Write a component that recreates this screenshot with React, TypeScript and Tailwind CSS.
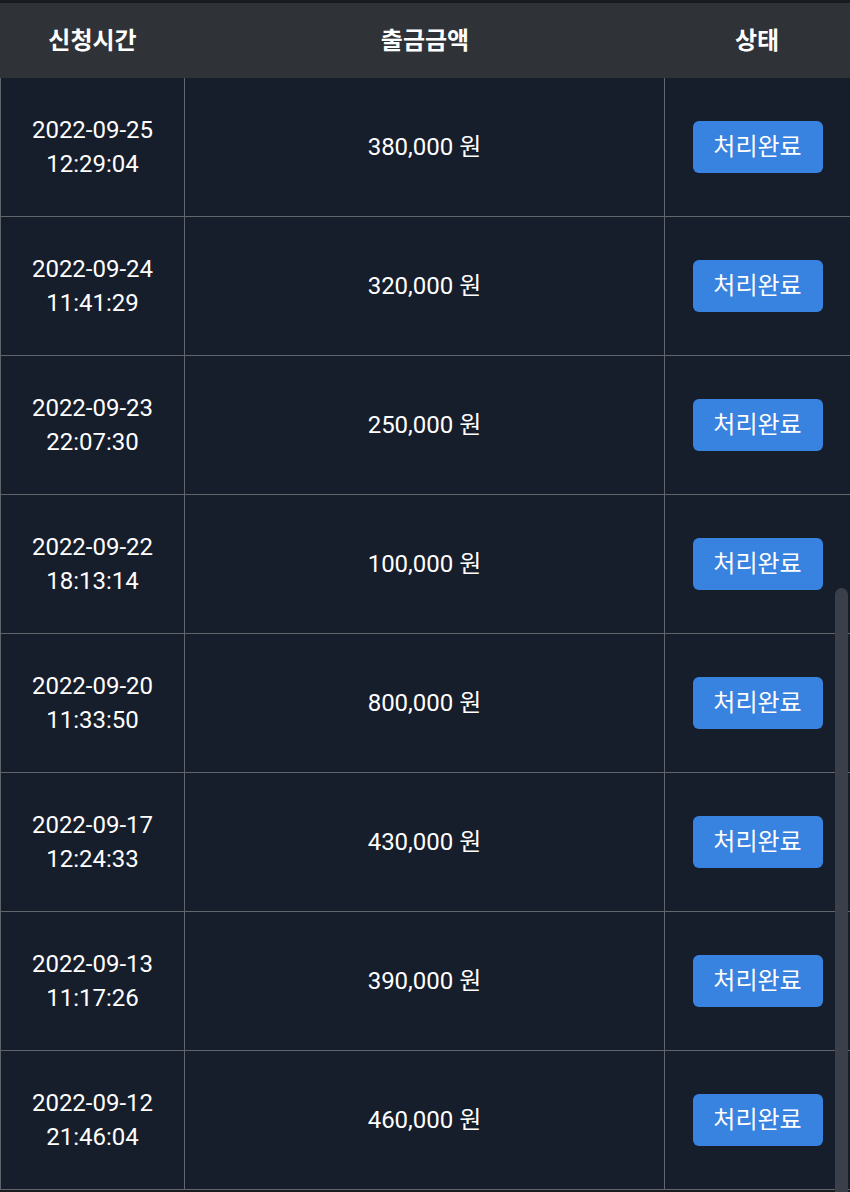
import React from "react";

type Row = { date: string; time: string; amount: string };

const rows: Row[] = [
	{ date: "2022-09-25", time: "12:29:04", amount: "380,000" },
	{ date: "2022-09-24", time: "11:41:29", amount: "320,000" },
	{ date: "2022-09-23", time: "22:07:30", amount: "250,000" },
	{ date: "2022-09-22", time: "18:13:14", amount: "100,000" },
	{ date: "2022-09-20", time: "11:33:50", amount: "800,000" },
	{ date: "2022-09-17", time: "12:24:33", amount: "430,000" },
	{ date: "2022-09-13", time: "11:17:26", amount: "390,000" },
	{ date: "2022-09-12", time: "21:46:04", amount: "460,000" },
];

export default function App() {
	return (
		<div
			className="relative w-[850px] h-[1192px] overflow-hidden bg-[#1b1c1f] text-white"
			style={{ fontFamily: "Roboto, 'Noto Sans CJK KR', sans-serif" }}>
			<div className="h-[3px] bg-[#1a1b1e]" />
			{/* Header */}
			<div className="grid grid-cols-[185px_480px_1fr] h-[75px] bg-[#2f3237] text-[24px] font-bold">
				<div className="flex items-center justify-center">신청시간</div>
				<div className="flex items-center justify-center">출금금액</div>
				<div className="flex items-center justify-center pr-[1px]">상태</div>
			</div>

			{/* Rows */}
			<div className="bg-[#161d2b] border-l border-[#5f6268]">
				{rows.map((r) => (
					<div
						key={r.date}
						className="grid grid-cols-[184px_480px_1fr] h-[139px] border-b border-[#62656b]">
						<div className="flex flex-col items-center justify-center border-r border-[#62656b] text-[24px] leading-[34px]">
							<span>{r.date}</span>
							<span>{r.time}</span>
						</div>
						<div className="flex items-center justify-center border-r border-[#62656b] text-[24px]">
							{r.amount} 원
						</div>
						<div className="flex items-center justify-center pb-[1px]">
							<button className="w-[130px] h-[52px] rounded-[6px] bg-[#3882e0] text-[24px] text-white">
								처리완료
							</button>
						</div>
					</div>
				))}
			</div>

			{/* scrollbar thumb */}
			<div className="absolute right-[2px] top-[588px] w-[13px] h-[620px] rounded-full bg-[#3a3f49]" />
		</div>
	);
}
